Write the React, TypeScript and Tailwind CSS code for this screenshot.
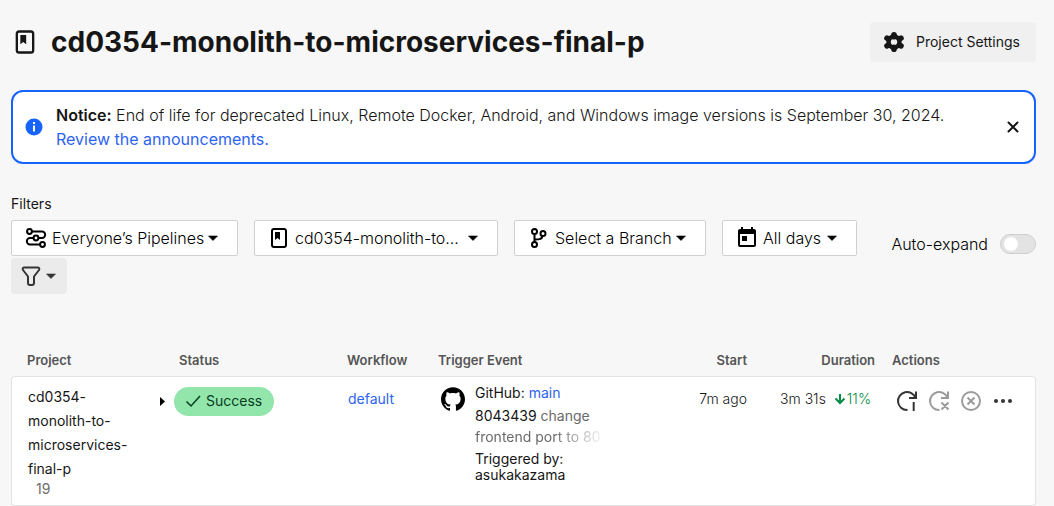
import type { ReactNode } from "react";
import { SiGithub } from "react-icons/si";
import { MdToday } from "react-icons/md";

function ProjectIcon({ className }: { className: string }) {
  return (
    <svg viewBox="0 0 24 24" className={className} aria-hidden="true">
      <rect x="5" y="3" width="14" height="18" rx="2" fill="none" stroke="currentColor" strokeWidth="2" />
      <path d="M8 6h5v8l-2.500-2L8 14z" fill="currentColor" />
    </svg>
  );
}

function GearIcon() {
  return (
    <svg viewBox="0 0 24 24" className="size-6" aria-hidden="true">
      <g stroke="currentColor" strokeWidth="5.600" strokeLinecap="round">
        <path d="M12 4.800v2M12 17.200v2M5 8.200l1.700 1M17.300 14.800l1.700 1M19 8.200l-1.700 1M6.700 14.800l-1.700 1" />
      </g>
      <circle cx="12" cy="12" r="5.500" fill="none" stroke="currentColor" strokeWidth="4.400" />
    </svg>
  );
}

function PipelineIcon() {
  return (
    <svg viewBox="0 0 24 24" className="size-6 shrink-0" fill="none" stroke="currentColor" strokeWidth="2" aria-hidden="true">
      <circle cx="5.500" cy="5.500" r="2.400" />
      <circle cx="12" cy="12" r="2.400" />
      <circle cx="18.500" cy="18.500" r="2.400" />
      <path d="M8 5.500h10a3.150 3.250 0 0 1 0 6.500h-3.500M9.500 12H6a3.150 3.250 0 0 0 0 6.500h10" />
    </svg>
  );
}

function BranchIcon() {
  return (
    <svg viewBox="0 0 24 24" className="size-6 shrink-0" fill="none" stroke="currentColor" strokeWidth="2" aria-hidden="true">
      <circle cx="7.500" cy="5.500" r="2.500" />
      <circle cx="16" cy="7.500" r="2.500" />
      <circle cx="7.500" cy="18.500" r="2.500" />
      <path d="M7.500 8v8M15.500 10c-.5 3-2.500 3.500-8 3.500" />
    </svg>
  );
}

function Caret({ className }: { className: string }) {
  return (
    <svg viewBox="0 0 24 24" className={className} aria-hidden="true">
      <path d="M7.500 10h9L12 14.500z" fill="currentColor" stroke="currentColor" strokeWidth=".6" strokeLinejoin="round" />
    </svg>
  );
}

function FilterSelect({ icon, label, value, className }: { icon: ReactNode; label: string; value: string; className: string }) {
  return (
    <label className={`flex h-9 items-center gap-1 rounded-xs border border-[#d0d0d0] bg-white px-3 text-black ${className}`}>
      {icon}
      <select aria-label={label} className="min-w-0 flex-1 appearance-none bg-transparent text-base font-light outline-none">
        <option>{value}</option>
      </select>
      <Caret className="pointer-events-none -ml-2 size-6 shrink-0" />
    </label>
  );
}

function ActionButton({ label, disabled, children }: { label: string; disabled?: boolean; children: ReactNode }) {
  return (
    <button type="button" aria-label={label} disabled={disabled} className="size-6 text-[#343434] disabled:text-[#9b9b9b]">
      <svg viewBox="0 0 24 24" className="size-6" fill="none" stroke="currentColor" strokeWidth="2" aria-hidden="true">
        {children}
      </svg>
    </button>
  );
}

const th = "h-8 p-0 align-middle font-semibold";
const td = "border-y border-[#e3e3e3] bg-white p-0 align-top";

export default function App() {
  return (
    <main className="min-h-screen bg-[#f7f7f7] pr-[18px] pl-[11px] pt-[22px] font-['Inter',sans-serif] text-[#161616]">
      <header className="flex h-10 items-center justify-between">
        <div className="flex items-center gap-3">
          <ProjectIcon className="size-7" />
          <h1 className="text-[28px] leading-10 font-bold">cd0354-monolith-to-microservices-final-p</h1>
        </div>
        <a href="#settings" className="flex h-10 items-center gap-2.5 rounded bg-[#f0f0f0] px-3 pr-4 text-sm">
          <GearIcon />
          Project Settings
        </a>
      </header>

      <section className="mt-7 flex items-center rounded-xl border-2 border-[#1763fd] bg-white py-[11px] pr-[13px] pl-3 leading-6">
        <svg viewBox="0 0 18 18" className="size-[18px] shrink-0" aria-hidden="true">
          <circle cx="9" cy="9" r="8.500" fill="#1763fd" />
          <path d="M8 7.500h2v6H8zM8 4h2v2H8z" fill="#fff" />
        </svg>
        <p className="ml-[13px] flex-1 text-base font-light">
          <strong className="font-semibold">Notice:</strong> End of life for deprecated Linux, Remote Docker, Android, and Windows image versions is September 30, 2024.
          <br />
          <a href="#announcements" className="font-normal text-[#2d64f0]">Review the announcements.</a>
        </p>
        <button type="button" aria-label="Dismiss" className="size-4">
          <svg viewBox="0 0 16 16" className="size-4" stroke="currentColor" strokeWidth="2" strokeLinecap="round" aria-hidden="true">
            <path d="M3.500 3.500l9 9M12.500 3.500l-9 9" />
          </svg>
        </button>
      </section>

      <section className="mt-7">
        <h2 className="mb-1 text-sm leading-6">Filters</h2>
        <div className="flex items-start justify-between gap-4">
          <div className="flex flex-1 flex-wrap gap-x-4 gap-y-0.5">
            <FilterSelect icon={<PipelineIcon />} label="Pipelines" value="Everyone’s Pipelines" className="w-[227px]" />
            <FilterSelect icon={<ProjectIcon className="size-6 shrink-0" />} label="Project" value="cd0354-monolith-to..." className="w-[244px]" />
            <FilterSelect icon={<BranchIcon />} label="Branch" value="Select a Branch" className="w-48" />
            <FilterSelect icon={<MdToday className="size-6 shrink-0" />} label="Date range" value="All days" className="w-[135px]" />
            <button type="button" aria-label="More filters" className="flex h-9 w-14 items-center rounded bg-[#ebebeb] pl-2 text-[#343434]">
              <svg viewBox="0 0 24 24" className="size-6" fill="none" stroke="currentColor" strokeWidth="2" strokeLinejoin="round" aria-hidden="true">
                <path d="M5 3.500h14c1.500 0 1.500 1.500 1 2.500l-5 6.500v6.500c0 1.500-1 2-2 2h-2c-1 0-2-.5-2-2v-6.500L4 6c-.5-1-.5-2.500 1-2.500z" />
              </svg>
              <Caret className="-ml-1 size-6" />
            </button>
          </div>
          <label className="flex h-12 items-center gap-3 text-base font-light text-black">
            Auto-expand
            <input
              type="checkbox"
              role="switch"
              className="flex h-5 w-9 appearance-none items-center rounded-full border border-[#cfcfcf] bg-[#e3e3e3] px-[3px] before:size-3.5 before:rounded-full before:bg-white checked:justify-end checked:bg-[#1763fd]"
            />
          </label>
        </div>
      </section>

      <table className="mt-[50px] w-full table-fixed border-separate border-spacing-0 text-left text-sm">
        <colgroup>
          <col className="w-36" />
          <col className="w-[184px]" />
          <col className="w-[92px]" />
          <col />
          <col className="w-[116px]" />
          <col className="w-32" />
          <col className="w-40" />
        </colgroup>
        <thead className="text-[13px] text-[#555]">
          <tr>
            <th className={`${th} pl-4`}>Project</th>
            <th className={`${th} pl-6`}>Status</th>
            <th className={`${th} pl-2`}>Workflow</th>
            <th className={`${th} pl-[7px]`}>Trigger Event</th>
            <th className={`${th} pr-px text-right`}>Start</th>
            <th className={`${th} pr-px text-right`}>Duration</th>
            <th className={`${th} pl-4`}>Actions</th>
          </tr>
        </thead>
        <tbody>
          <tr>
            <td className={`${td} rounded-l border-l`}>
              <div className="py-2 pl-4">
                <a href="#project" className="block w-28 leading-6">cd0354-monolith-to-microservices-final-p</a>
                <span className="block pl-2 leading-4 text-[#6e6e6e]">19</span>
              </div>
            </td>
            <td className={td}>
              <div className="flex items-center pt-2.5 pl-1">
                <button type="button" aria-label="Expand workflows" className="w-[15px]">
                  <svg viewBox="0 0 15 12" className="h-3 w-[15px]" aria-hidden="true">
                    <path d="M1 1v9l5-4.500z" fill="#000" />
                  </svg>
                </button>
                <span className="flex h-[29px] items-center gap-1 rounded-full bg-[#92e5ab] pr-3 pb-px pl-2.5 text-[#083d23]">
                  <svg viewBox="0 0 18 18" className="size-[18px]" fill="none" stroke="currentColor" strokeWidth="1.500" aria-hidden="true">
                    <path d="M2.500 9.500l4.500 4.500 9-10" />
                  </svg>
                  Success
                </span>
              </div>
            </td>
            <td className={td}>
              <a href="#workflow" className="block pt-3 pl-[9px] text-[#2d64f0]">default</a>
            </td>
            <td className={td}>
              <div className="flex gap-2.5 pl-[10px]">
                <SiGithub className="mt-2.5 size-6 shrink-0 text-black" />
                <div className="w-[130px] pt-1">
                  <p className="leading-6">
                    GitHub: <a href="#branch" className="text-[#2d64f0]">main</a>
                  </p>
                  <div className="leading-[21px] text-[#6a6a6a]">
                    <p>
                      <a href="#commit" className="text-[#161616]">8043439</a> change
                    </p>
                    <p className="mask-r-from-60% mask-r-to-100%">frontend port to 80</p>
                  </div>
                  <p className="mt-1 leading-4">Triggered by: asukakazama</p>
                </div>
              </div>
            </td>
            <td className={`${td} text-right`}>
              <span className="block pt-3 pr-px font-light">7m ago</span>
            </td>
            <td className={`${td} text-right`}>
              <div className="flex items-center justify-end gap-px pt-3 pr-[5px] font-light">
                3m 31s
                <svg viewBox="0 0 12 12" className="ml-[7px] size-3" fill="none" stroke="#078a42" strokeWidth="2" aria-hidden="true">
                  <path d="M6 1v9M1.500 5.500L6 10l4.500-4.500" />
                </svg>
                <span className="text-[#078a42]">11%</span>
              </div>
            </td>
            <td className={`${td} rounded-r border-r`}>
              <div className="flex gap-2 pt-3 pl-[19px]">
                <ActionButton label="Rerun workflow">
                  <path d="M12.500 21H12a9 9 0 1 1 8.500-12M21 2.500V9h-7M18.700 13v9" />
                </ActionButton>
                <ActionButton label="Rerun from failed" disabled>
                  <path d="M12.500 21H12a9 9 0 1 1 8.500-12M21 2.500V9h-7M14.500 13.500l7 7M21.500 13.500l-7 7" />
                </ActionButton>
                <ActionButton label="Cancel workflow" disabled>
                  <circle cx="12" cy="12" r="9" />
                  <path d="M8.500 8.500l7 7M15.500 8.500l-7 7" />
                </ActionButton>
                <ActionButton label="More actions">
                  <g fill="currentColor" stroke="none">
                    <circle cx="5" cy="12" r="2" />
                    <circle cx="12" cy="12" r="2" />
                    <circle cx="19" cy="12" r="2" />
                  </g>
                </ActionButton>
              </div>
            </td>
          </tr>
        </tbody>
      </table>
    </main>
  );
}
